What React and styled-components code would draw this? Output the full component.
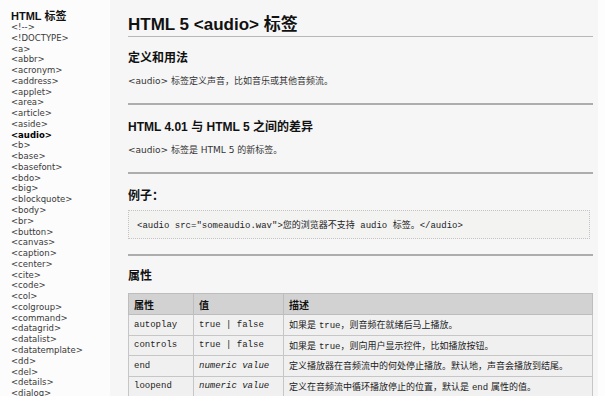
import React from 'react';
import styled, { createGlobalStyle } from 'styled-components';

const GlobalStyle = createGlobalStyle`
  html, body {
    margin: 0;
    padding: 0;
    background: #fbfbfb;
  }
  body {
    font-family: "DejaVu Sans", "Noto Sans CJK SC", sans-serif;
    color: #333;
  }
`;

const Page = styled.div`
  display: flex;
  width: 605px;
  height: 396px;
  overflow: hidden;
`;

const Sidebar = styled.nav`
  flex: 0 0 110px;
  padding: 10px 0 0 11px;
  box-sizing: border-box;
  background: #fcfcfc;
`;

const SideTitle = styled.div`
  font-family: "Liberation Sans", "Noto Sans CJK SC", sans-serif;
  font-weight: bold;
  font-size: 11px;
  line-height: 12px;
  color: #111;
`;

const SideList = styled.ul`
  list-style: none;
  margin: 0;
  padding: 0;
`;

const SideItem = styled.li`
  font-size: 8.5px;
  line-height: 10.76px;
  color: ${p => (p.$active ? '#000' : '#3a3a3a')};
  font-weight: ${p => (p.$active ? 'bold' : 'normal')};
  white-space: nowrap;
`;

const Main = styled.main`
  flex: 1;
  padding: 15px 5px 0 18px;
  background: #f6f6f6;
  border-right: 7px solid #fdfdfd;
`;

const Title = styled.h1`
  margin: 0;
  font-family: "Liberation Sans", "Noto Sans CJK SC", sans-serif;
  font-size: 17px;
  line-height: 20px;
  font-weight: bold;
  color: #111;
  padding-bottom: 1px;
  border-bottom: 1px solid #b8b8b8;
`;

const Section = styled.section`
  padding-bottom: ${p => p.$pb ?? 15}px;
  border-bottom: 2px solid #adadad;
`;

const Heading = styled.h2`
  margin: ${p => p.$mt ?? 14}px 0 0;
  font-family: "Liberation Sans", "Noto Sans CJK SC", sans-serif;
  font-size: 12px;
  line-height: 16px;
  font-weight: bold;
  color: #111;
`;

const Text = styled.p`
  margin: 8px 0 0;
  font-size: 9px;
  line-height: 14px;
  color: #333;
`;

const CodeBox = styled.div`
  margin: 6px 3px 0 0;
  height: 29px;
  box-sizing: border-box;
  display: flex;
  align-items: center;
  padding-left: 8px;
  background: #f3f3f2;
  border: 1px dotted #c4c4c4;
  font-family: "Liberation Mono", "Noto Sans CJK SC", monospace;
  font-size: 9px;
  color: #222;
  white-space: nowrap;
`;

const Table = styled.table`
  margin-top: 9px;
  width: 100%;
  border-collapse: collapse;
  font-size: 9px;
  color: #222;
`;

const Th = styled.th`
  width: ${p => p.$w || 'auto'};
  height: 20px;
  padding: 0 5px;
  text-align: left;
  background: #d2d2d2;
  border: 1px solid #bdbdbd;
  font-family: "Liberation Sans", "Noto Sans CJK SC", sans-serif;
  font-size: 10px;
  font-weight: bold;
  color: #111;
`;

const Td = styled.td`
  height: 19.5px;
  padding: 0 5px;
  background: #f0f0f0;
  border: 1px solid #c6c6c6;
  white-space: nowrap;
  font-family: ${p => (p.$mono ? '"Liberation Mono", "Noto Sans CJK SC", monospace' : 'inherit')};
  font-style: ${p => (p.$italic ? 'italic' : 'normal')};
`;

const Mono = styled.span`
  font-family: "Liberation Mono", monospace;
`;

const tags = [
  '<!-->', '<!DOCTYPE>', '<a>', '<abbr>', '<acronym>', '<address>', '<applet>', '<area>',
  '<article>', '<aside>', '<audio>', '<b>', '<base>', '<basefont>', '<bdo>', '<big>',
  '<blockquote>', '<body>', '<br>', '<button>', '<canvas>', '<caption>', '<center>', '<cite>',
  '<code>', '<col>', '<colgroup>', '<command>', '<datagrid>', '<datalist>', '<datatemplate>',
  '<dd>', '<del>', '<details>', '<dialog>',
];

const attrs = [
  { name: 'autoplay', value: 'true | false', desc: ['如果是 ', 'true', '，则音频在就绪后马上播放。'] },
  { name: 'controls', value: 'true | false', desc: ['如果是 ', 'true', '，则向用户显示控件，比如播放按钮。'] },
  { name: 'end', value: 'numeric value', italic: true, desc: ['定义播放器在音频流中的何处停止播放。默认地，声音会播放到结尾。'] },
  { name: 'loopend', value: 'numeric value', italic: true, desc: ['定义在音频流中循环播放停止的位置，默认是 ', 'end', ' 属性的值。'] },
];

export default function App() {
  return (
    <Page>
      <GlobalStyle />
      <Sidebar>
        <SideTitle>HTML 标签</SideTitle>
        <SideList>
          {tags.map(t => (
            <SideItem key={t} $active={t === '<audio>'}>{t}</SideItem>
          ))}
        </SideList>
      </Sidebar>
      <Main>
        <Title>HTML 5 &lt;audio&gt; 标签</Title>
        <Section>
          <Heading $mt={13}>定义和用法</Heading>
          <Text>&lt;audio&gt; 标签定义声音，比如音乐或其他音频流。</Text>
        </Section>
        <Section>
          <Heading>HTML 4.01 与 HTML 5 之间的差异</Heading>
          <Text>&lt;audio&gt; 标签是 HTML 5 的新标签。</Text>
        </Section>
        <Section>
          <Heading>例子：</Heading>
          <CodeBox>&lt;audio src="someaudio.wav"&gt;您的浏览器不支持 audio 标签。&lt;/audio&gt;</CodeBox>
        </Section>
        <Heading $mt={12}>属性</Heading>
        <Table>
          <thead>
            <tr>
              <Th $w="54px">属性</Th>
              <Th $w="79px">值</Th>
              <Th>描述</Th>
            </tr>
          </thead>
          <tbody>
            {attrs.map(a => (
              <tr key={a.name}>
                <Td $mono>{a.name}</Td>
                <Td $mono $italic={a.italic}>{a.value}</Td>
                <Td>
                  {a.desc.map((d, i) => (i % 2 === 1 ? <Mono key={i}>{d}</Mono> : <span key={i}>{d}</span>))}
                </Td>
              </tr>
            ))}
          </tbody>
        </Table>
      </Main>
    </Page>
  );
}
